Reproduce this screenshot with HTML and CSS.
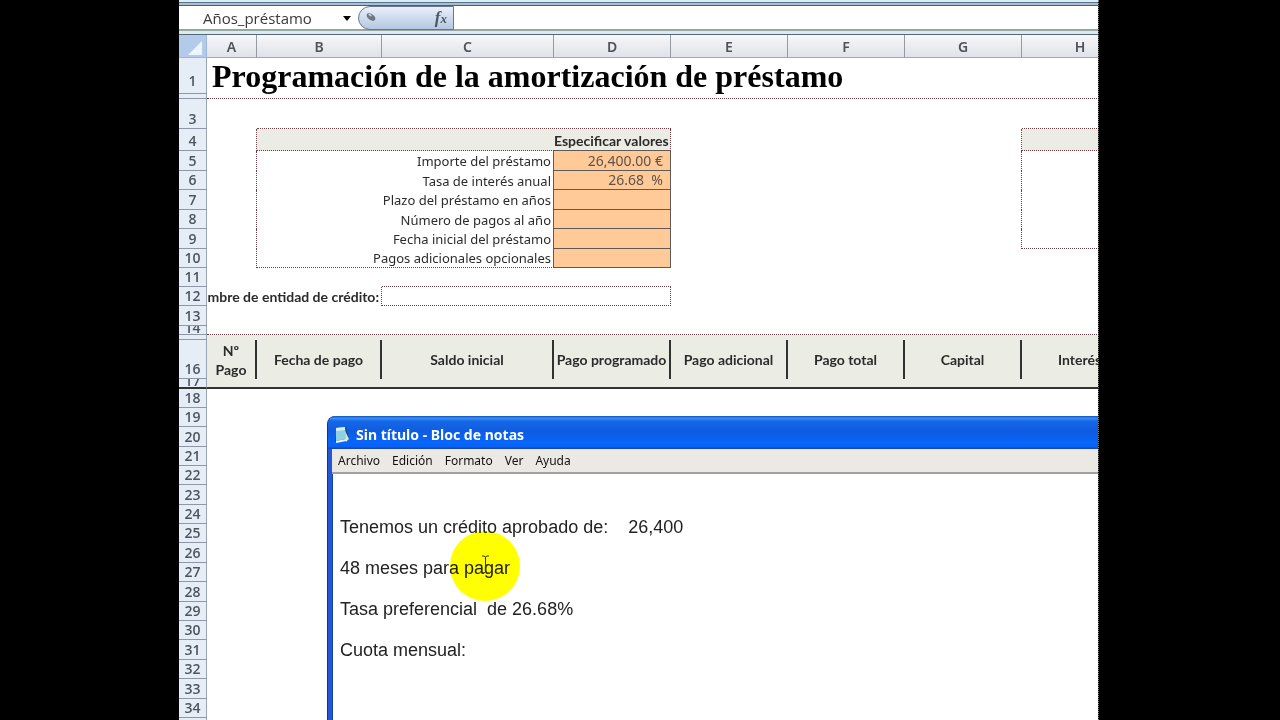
FILE: index.html
```html
<!DOCTYPE html>
<html lang="es">
<head>
<meta charset="utf-8">
<title>Programación de la amortización de préstamo</title>
<link rel="stylesheet" href="styles.css">
</head>
<body>
<main class="app">
  <div class="ribbon-edge"></div>
  <div class="formula-bar">
    <input class="name-box" type="text" value="Años_préstamo" aria-label="Cuadro de nombres">
    <button class="name-toggle" type="button" aria-label="Mostrar nombres"><svg width="8" height="5" viewBox="0 0 8 5"><path d="M0 0h8L4 5z"/></svg></button>
    <button class="fx" type="button" aria-label="Insertar función">
      <svg width="94" height="22" viewBox="0 0 94 22">
        <g transform="rotate(38 12 10)"><ellipse cx="12" cy="10" rx="5" ry="3" fill="#6d7682"/><ellipse cx="10" cy="9" rx="2" ry="1" fill="#c9d0da"/></g>
      </svg>
      <span class="fx-label">f<small>x</small></span>
    </button>
    <input class="formula" type="text" aria-label="Barra de fórmulas">
  </div>
  <div class="sheet">
    <table class="grid">
      <colgroup><col class="c-num"><col class="c-a"><col class="c-b"><col class="c-c"><col class="c-d"><col class="c-d"><col class="c-d"><col class="c-d"><col class="c-d"></colgroup>
      <thead>
        <tr><th class="corner"><svg width="14" height="14" viewBox="0 0 14 14"><path d="M14 0v14H0z" fill="#eef4fb"/></svg></th><th>A</th><th>B</th><th>C</th><th>D</th><th>E</th><th>F</th><th>G</th><th>H</th></tr>
      </thead>
      <tbody>
        <tr class="r-title"><th>1</th><td colspan="8"><h1>Programación de la amortización de préstamo</h1></td></tr>
        <tr class="r-thin"><th></th><td class="dot-b" colspan="8"></td></tr>
        <tr class="r-gap"><th>3</th><td></td><td class="dot-b" colspan="3"></td><td colspan="3"></td><td class="dot-b"></td></tr>
        <tr class="r-head"><th>4</th><td class="dot-r"></td><td class="shade dot-b" colspan="2"></td><td class="shade dot-r strong val-b">Especificar valores</td><td colspan="2"></td><td class="dot-r"></td><td class="shade dot-b"></td></tr>
        <tr class="r20"><th>5</th><td class="dot-r"></td><td class="lab" colspan="2"><label for="v1">Importe del préstamo</label></td><td class="val"><input id="v1" value="26,400.00 €"></td><td colspan="2"></td><td class="dot-r"></td><td></td></tr>
        <tr class="r19"><th>6</th><td class="dot-r"></td><td class="lab" colspan="2"><label for="v2">Tasa de interés anual</label></td><td class="val"><input id="v2" value="26.68  %"></td><td colspan="2"></td><td class="dot-r"></td><td></td></tr>
        <tr class="r20"><th>7</th><td class="dot-r"></td><td class="lab" colspan="2"><label for="v3">Plazo del préstamo en años</label></td><td class="val"><input id="v3"></td><td colspan="2"></td><td class="dot-r"></td><td></td></tr>
        <tr class="r19"><th>8</th><td class="dot-r"></td><td class="lab" colspan="2"><label for="v4">Número de pagos al año</label></td><td class="val"><input id="v4"></td><td colspan="2"></td><td class="dot-r"></td><td></td></tr>
        <tr class="r20"><th>9</th><td class="dot-r"></td><td class="lab" colspan="2"><label for="v5">Fecha inicial del préstamo</label></td><td class="val"><input id="v5"></td><td colspan="2"></td><td class="dot-r"></td><td class="dot-b"></td></tr>
        <tr class="r19"><th>10</th><td class="dot-r"></td><td class="lab dot-b" colspan="2"><label for="v6">Pagos adicionales opcionales</label></td><td class="val"><input id="v6"></td><td colspan="4"></td></tr>
        <tr class="r19"><th>11</th><td colspan="2"></td><td class="dot-b" colspan="2"></td><td colspan="4"></td></tr>
        <tr class="r19"><th>12</th><td class="dot-r" colspan="2"><label class="entity strong" for="ent">Nombre de entidad de crédito:</label></td><td class="dot-b dot-r" colspan="2"><input id="ent" class="plain"></td><td colspan="4"></td></tr>
        <tr class="r20"><th>13</th><td colspan="8"></td></tr>
        <tr class="r-cut"><th><div class="cut">14</div></th><td class="dot-b" colspan="8"></td></tr>
        <tr class="r-thin"><th></th><td class="shade" colspan="8"></td></tr>
        <tr class="r-fields"><th>16</th><td>Nº<br>Pago</td><td>Fecha de pago</td><td>Saldo inicial</td><td>Pago programado</td><td>Pago adicional</td><td>Pago total</td><td>Capital</td><td>Interés</td></tr>
        <tr class="r-cut r-end"><th><div class="cut">17</div></th><td class="shade" colspan="8"></td></tr>
        <tr class="r19"><th>18</th><td colspan="8"></td></tr>
        <tr class="r19"><th>19</th><td colspan="8"></td></tr>
        <tr class="r20"><th>20</th><td colspan="8"></td></tr>
        <tr class="r19"><th>21</th><td colspan="8"></td></tr>
        <tr class="r19"><th>22</th><td colspan="8"></td></tr>
        <tr class="r20"><th>23</th><td colspan="8"></td></tr>
        <tr class="r19"><th>24</th><td colspan="8"></td></tr>
        <tr class="r19"><th>25</th><td colspan="8"></td></tr>
        <tr class="r20"><th>26</th><td colspan="8"></td></tr>
        <tr class="r19"><th>27</th><td colspan="8"></td></tr>
        <tr class="r20"><th>28</th><td colspan="8"></td></tr>
        <tr class="r19"><th>29</th><td colspan="8"></td></tr>
        <tr class="r19"><th>30</th><td colspan="8"></td></tr>
        <tr class="r20"><th>31</th><td colspan="8"></td></tr>
        <tr class="r19"><th>32</th><td colspan="8"></td></tr>
        <tr class="r20"><th>33</th><td colspan="8"></td></tr>
        <tr class="r19"><th>34</th><td colspan="8"></td></tr>
        <tr class="r19"><th></th><td colspan="8"></td></tr>
      </tbody>
    </table>
    <section class="notepad">
      <header class="titlebar">
        <svg width="16" height="18" viewBox="0 0 16 18"><path d="M3 2l9-1 3 12-3 3H1z" fill="#1d4a78"/><path d="M2 2l9-1 1 12-10 2z" fill="#8fd0e4"/><path d="M2 2l9-1v3l-9 1z" fill="#d8eef0"/><path d="M11 5l4 8-3 3z" fill="#d9e6dc"/><path d="M2 15l10-2 1 2-11 2z" fill="#e9f4f4"/></svg>
        <h2>Sin título - Bloc de notas</h2>
      </header>
      <nav class="menu"><button type="button">Archivo</button><button type="button">Edición</button><button type="button">Formato</button><button type="button">Ver</button><button type="button">Ayuda</button></nav>
      <textarea class="note" aria-label="Texto" spellcheck="false">Tenemos un crédito aprobado de:    26,400
48 meses para pagar
Tasa preferencial  de 26.68%
Cuota mensual:</textarea>
      <div class="spot"></div>
      <svg class="caret" width="9" height="20" viewBox="0 0 9 20"><path d="M1 1h2l1.500 1L6 1h2M4.500 2v15M1 18h2l1.500-1L6 18h2" fill="none" stroke="#33330a"/></svg>
    </section>
  </div>
</main>
</body>
</html>
```
FILE: styles.css
```css
* { box-sizing: border-box; }
body { margin: 0; background: #000; }
input, button, textarea { font: inherit; color: inherit; border: 0; padding: 0; margin: 0; background: none; outline: 0; border-radius: 0; }

.app {
  margin: 0 181px 0 179px;
  height: 100vh;
  display: flex;
  flex-direction: column;
  overflow: hidden;
  background: #fff;
  border-right: 1px dotted #8a7478;
  background-clip: padding-box;
  font-family: "Noto Sans", sans-serif;
  color: #2b2b2b;
}
.ribbon-edge { flex: none; height: 6px; background: linear-gradient(#d5eefa 2px, #5c7185 2px 3px, #a9bed2 3px 5px, #4d5f72 5px); }
.formula-bar { flex: none; height: 29px; display: flex; background: #fff; border-bottom: 1px solid #566878; box-shadow: inset 0 -3px #dcebf0, inset 0 -5px #9aa6a3; }
.name-box { width: 160px; height: 24px; padding-left: 24px; font-family: "Open Sans", sans-serif; font-size: 15px; color: #3a3a3a; }
.name-toggle { width: 19px; height: 24px; padding-right: 3px; display: flex; align-items: center; justify-content: center; }
.fx { position: relative; flex: none; width: 96px; height: 24px; border: 1px solid #66788f; border-radius: 12px 0 0 12px; background: linear-gradient(#e9f0f8, #b4c7e2); text-align: left; }
.fx svg { display: block; }
.fx-label { position: absolute; right: 6px; top: 1px; font: italic bold 17px/20px "Liberation Serif", serif; color: #4d5663; }
.fx-label small { font-size: 13px; }
.formula { flex: 1; min-width: 0; height: 24px; }

.sheet { position: relative; flex: 1; min-height: 0; overflow: hidden; }
.grid { width: 948px; table-layout: fixed; border-collapse: separate; border-spacing: 0; font-size: 13px; line-height: 18px; }
.c-num { width: 28px; }
.c-a { width: 50px; }
.c-b { width: 125px; }
.c-c { width: 172px; }
.c-d { width: 117px; }
.grid th, .grid td { padding: 0; white-space: nowrap; }
.grid thead th { height: 23px; padding-top: 1px; font-size: 14px; font-weight: 600; line-height: 21px; color: #4d5359; background: linear-gradient(#f6f8fa, #dfe2e8); border-right: 1px solid #959ba3; border-bottom: 1px solid #a3a9b2; }
.grid thead .corner { background: #b3cbea; border-color: #9fb6d4; padding: 4px 4px 0 0; text-align: right; line-height: 0; }
.grid tbody th { font-family: "Open Sans", sans-serif; font-size: 14px; font-weight: 600; color: #4d5560; background: #e6edf7; border-right: 1px solid #98a3b4; border-bottom: 1px solid #8d97a6; vertical-align: bottom; }
.r-title { height: 36px; }
.grid .r-title th { padding-bottom: 3px; }
.r-thin { height: 5px; }
.r-gap { height: 30px; }
.r-head { height: 22px; }
.r19 { height: 19px; }
.r20 { height: 20px; }
.r-cut { height: 9px; }
.r-end { height: 10px; }
.r-fields { height: 39px; }
h1 { margin: 0; padding-left: 5px; font: bold 32px/36px "Liberation Serif", serif; color: #000; }
.dot-b { border-bottom: 1px dotted #6b3c46; }
.dot-r { border-right: 1px dotted #6b3c46; }
.shade { background: #ebede5; }
.strong, .r-fields td { font-family: Lato, sans-serif; font-size: 14px; font-weight: 700; }
.grid .val-b { border-bottom: 1px solid #5f5a55; padding-right: 2px; text-align: right; vertical-align: bottom; }
.grid .lab { text-align: right; padding-right: 2px; border-right: 1px solid #5f5a55; }
.val { background: #ffca97; border-right: 1px solid #5f5a55; border-bottom: 1px solid #5f5a55; }
.val input { display: block; width: 100%; height: 18px; padding-right: 7px; text-align: right; font-size: 14px; color: #5c534c; white-space: pre; }
.plain { display: block; width: 100%; height: 18px; }
.entity { display: flex; justify-content: flex-end; overflow: hidden; padding-right: 2px; }
.cut { display: flex; align-items: flex-end; justify-content: center; height: 8px; overflow: hidden; line-height: 12px; }
.r-fields td { background: #ebede5; border-right: 2px solid #2f332f; text-align: center; line-height: 19px; }
.grid .r-end th, .grid .r-end td { border-bottom: 2px solid #30332f; }

.notepad { position: absolute; inset: 381px 0 0 149px; display: flex; flex-direction: column; border-left: 4px solid #2456d8; border-radius: 8px 0 0 0; background: #fff; box-shadow: inset 1px 0 #1a3fae, -1px 0 #15308f; }
.titlebar { flex: none; height: 33px; margin-left: -4px; padding: 5px 0 0 6px; display: flex; align-items: center; gap: 6px; border-radius: 8px 0 0 0; background: linear-gradient(#1c5fc4 1px, #3b94fa 2px, #1668e8 5px, #0f5be0 15px, #0666fb 27px, #0862f4 31px, #1646b8 32px); }
h2 { margin: 0; font: bold 14px/20px "Noto Sans", sans-serif; color: #fff; }
.menu { flex: none; height: 25px; display: flex; align-items: center; gap: 12px; padding: 0 6px; background: #ebe9e3; border-bottom: 2px solid #a0a2a4; font-size: 12px; color: #111; }
.note { flex: 1; min-height: 0; width: 100%; padding: 33px 8px; resize: none; overflow: hidden; font: 18px/41px "Liberation Sans", sans-serif; color: #222; }
.spot { position: absolute; left: 118px; top: 115px; width: 70px; height: 70px; border-radius: 50%; background: #ff0; mix-blend-mode: multiply; pointer-events: none; }
.caret { position: absolute; left: 149px; top: 139px; pointer-events: none; }
```
